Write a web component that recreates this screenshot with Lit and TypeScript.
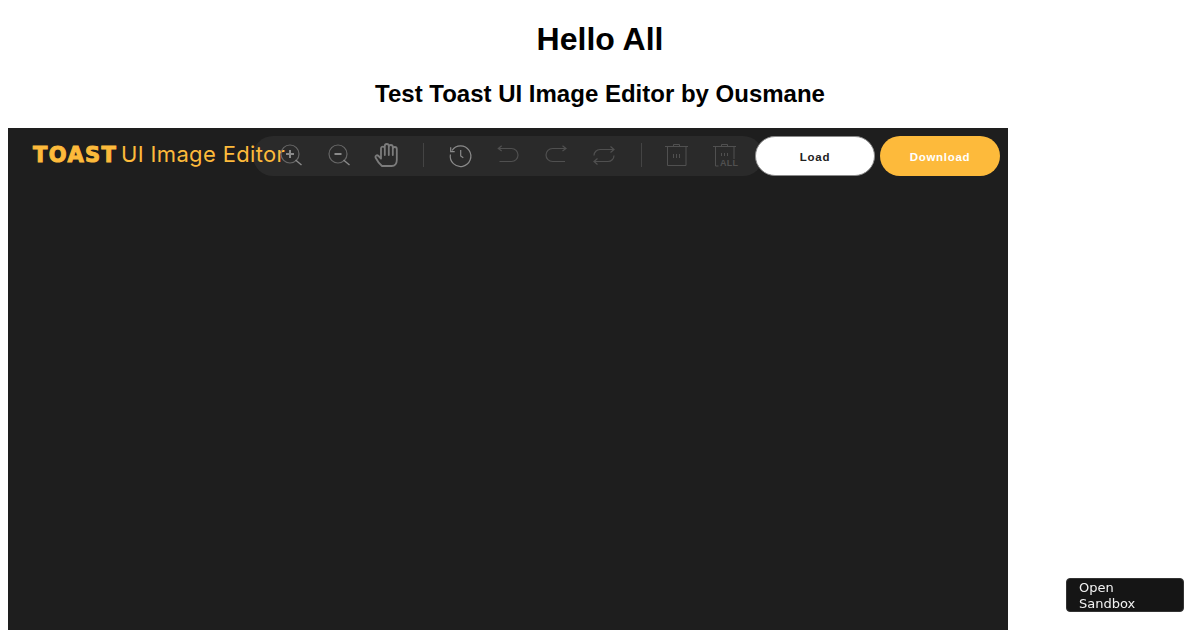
import { LitElement, html, css, svg } from "lit";
import { customElement } from "lit/decorators.js";

const icon = (body: unknown) => html`<span class="item"><svg width="32" height="32" viewBox="0 0 32 32" fill="none">${body}</svg></span>`;

const BRIGHT = "#8a8a8a";
const MID = "#666666";
const DIM = "#505050";

const zoomIn = svg`<circle cx="16" cy="15" r="9" stroke=${MID} stroke-width="1.2"/><path d="M21.5 21 27.500 26" stroke=${BRIGHT} stroke-width="1.4"/><path d="M12 15h8M16 11v8" stroke=${BRIGHT} stroke-width="2"/>`;
const zoomOut = svg`<circle cx="16" cy="15" r="9" stroke=${MID} stroke-width="1.2"/><path d="M21.5 21 27.500 26" stroke=${BRIGHT} stroke-width="1.4"/><path d="M12.500 15h7" stroke=${BRIGHT} stroke-width="2"/>`;
const hand = svg`<path d="M12 27C9 24.500 7 21.500 5.500 18.500 5 16.500 7 15.500 8.500 17L11 19.500V9.500a1.900 1.900 0 0 1 3.800 0V16 7a2 2 0 0 1 4 0v9-8a2 2 0 0 1 4 0v8-6a2 2 0 0 1 4 0v11c0 3.500-2 6-5 6z" stroke="#7c7c7c" stroke-width="1.800" stroke-linejoin="round"/>`;
const history = svg`<path d="M8 11.500A10.300 10.300 0 1 1 6.400 15.500" stroke=${BRIGHT} stroke-width="1.200"/><path d="M6.700 8.300v4.400h4" stroke=${BRIGHT} stroke-width="1.200"/><path d="M16.700 11v6l2.600 1.700" stroke=${BRIGHT} stroke-width="1.200"/>`;
const undo = svg`<path d="M6.500 9.500H19.500a6.500 6.500 0 0 1 0 13H7.500" stroke=${DIM} stroke-width="1.200"/><path d="M9.700 6.700 6.300 9.500 9.700 12" stroke=${DIM} stroke-width="1.200"/>`;
const redo = svg`<path d="M26 9.500H12.500a6.500 6.500 0 0 0 0 13H25" stroke=${DIM} stroke-width="1.200"/><path d="M22.500 6.700 26 9.500 22.500 12" stroke=${DIM} stroke-width="1.200"/>`;
const reset = svg`<path d="M26 10.500H12a6 6 0 0 0-6 6M6 22.500h14a6 6 0 0 0 6-6" stroke=${DIM} stroke-width="1.200"/><path d="M22.500 7.500 26 10.500 22.500 13.500M9.500 19.500 6 22.500 9.500 25.500" stroke=${DIM} stroke-width="1.200"/>`;
const trash = svg`<path d="M5 7.500h23M13.500 7V5.500h6V7M7.500 8v18.500h18.500V8" stroke=${DIM} stroke-width="1"/><path d="M13.500 15v4M16.500 15v4M19.500 15v4" stroke=${DIM} stroke-width="1"/>`;
const trashAll = svg`<path d="M5 7.500h23M13.500 7V5.500h6V7M7.500 8v19h3M26 8v12" stroke=${DIM} stroke-width="1"/><path d="M13.500 14v3M16.500 14v3M19.500 14v3" stroke=${DIM} stroke-width="1"/><text x="12" y="27" class="all" fill=${DIM}>ALL</text>`;

@customElement("app-root")
export class AppRoot extends LitElement {
  static styles = css`
    :host { display: block; font-family: "Liberation Sans", Arial, sans-serif; color: #000; }
    h1, h2 { text-align: center; font-weight: 700; }
    h1 { font-size: 32px; margin: 21.44px 0; }
    h2 { font-size: 24px; margin: 19.92px 0; }
    .editor { margin: 0 8px; width: 1000px; height: 502px; background: #1e1e1e; }
    .header { display: flex; align-items: center; padding: 8px; height: 40px; }
    .logo { width: 237px; flex: none; display: flex; align-items: center; gap: 4px; padding-left: 17px; padding-bottom: 4px; box-sizing: border-box; color: #fdba3b; white-space: nowrap; position: relative; z-index: 1; }
    .toast { font-family: "DejaVu Sans", sans-serif; font-weight: 700; font-size: 21px; letter-spacing: 1.4px; line-height: 1; width: 84px; margin-top: 4px; -webkit-text-stroke: 1px #fdba3b; }
    .title { font-family: Inter, sans-serif; font-size: 22px; line-height: 1; letter-spacing: 0.35px; }
    .menu { flex: none; width: 510px; height: 40px; box-sizing: border-box; padding-left: 13px; background: #2a2a2a; border-radius: 20px; display: flex; align-items: center; }
    .item { width: 48px; height: 32px; display: flex; justify-content: center; position: relative; z-index: 2; margin-bottom: 2px; }
    .item svg { display: block; }
    .all { font: 700 9px "Liberation Sans", sans-serif; letter-spacing: 0.2px; }
    .divider { width: 1px; height: 24px; background: #444; margin: 0 12px 2px 13px; flex: none; }
    .divider.second { margin: 0 10px 2px 13px; }
    .actions { display: flex; gap: 5px; margin-left: -8px; position: relative; z-index: 3; }
    .btn { width: 120px; height: 40px; box-sizing: border-box; border-radius: 20px; font: 700 11.5px "Liberation Sans", Arial, sans-serif; letter-spacing: 0.7px; display: flex; align-items: center; justify-content: center; padding-top: 3px; }
    .load { background: #fff; border: 1px solid #8a8a8a; color: #222; }
    .download { background: #fdba3b; color: #fff; }
    .sandbox { position: fixed; left: 1066px; top: 578px; width: 118px; height: 34px; box-sizing: border-box; padding: 1px 12px; background: #151515; border: 1px solid #333; border-radius: 4px; color: #f2f2f2; font: 13px/16px "DejaVu Sans", sans-serif; }
  `;

  render() {
    return html`
      <h1>Hello All</h1>
      <h2>Test Toast UI Image Editor by Ousmane</h2>
      <div class="editor">
        <div class="header">
          <div class="logo"><span class="toast">TOAST</span><span class="title">UI Image Editor</span></div>
          <div class="menu">
            ${icon(zoomIn)}${icon(zoomOut)}${icon(hand)}
            <span class="divider"></span>
            ${icon(history)}${icon(undo)}${icon(redo)}${icon(reset)}
            <span class="divider second"></span>
            ${icon(trash)}${icon(trashAll)}
          </div>
          <div class="actions">
            <div class="btn load">Load</div>
            <div class="btn download">Download</div>
          </div>
        </div>
      </div>
      <div class="sandbox">Open Sandbox</div>
    `;
  }
}
